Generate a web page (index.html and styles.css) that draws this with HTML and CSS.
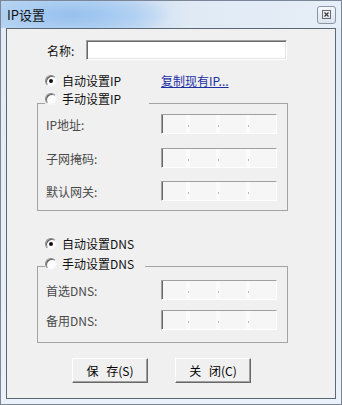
FILE: index.html
```html
<!DOCTYPE html>
<html lang="zh-CN">
<head>
<meta charset="utf-8">
<title>IP设置</title>
<link rel="stylesheet" href="styles.css">
</head>
<body>
<div class="window">
  <div class="titlebar">
    <span class="title">IP设置</span>
    <span class="close">
      <svg width="9" height="9" viewBox="0 0 9 9"><rect x="0.5" y="0.5" width="8" height="8" fill="none" stroke="#6a6a6a"/><path d="M2.5 2.5 L6.5 6.5 M6.5 2.5 L2.5 6.5" stroke="#3a3a3a" stroke-width="1.2"/></svg>
    </span>
  </div>
  <div class="client">
    <div class="name-row">
      <span class="name-label">名称:</span>
      <span class="textbox"></span>
    </div>
    <div class="radio-row ip-auto">
      <span class="radio-item wide"><span class="radio checked"></span><span>自动设置IP</span></span>
      <a class="link" href="#">复制现有IP...</a>
    </div>
    <div class="group group-ip">
      <div class="legend legend-ip"><span class="radio"></span><span>手动设置IP</span></div>
      <div class="field-row r1">
        <span class="field-label">IP地址:</span>
        <span class="ipbox"><span class="seg s1"></span><span class="dot"></span><span class="seg"></span><span class="dot"></span><span class="seg"></span><span class="dot"></span><span class="seg last"></span></span>
      </div>
      <div class="field-row r2">
        <span class="field-label">子网掩码:</span>
        <span class="ipbox"><span class="seg s1"></span><span class="dot"></span><span class="seg"></span><span class="dot"></span><span class="seg"></span><span class="dot"></span><span class="seg last"></span></span>
      </div>
      <div class="field-row r3">
        <span class="field-label">默认网关:</span>
        <span class="ipbox"><span class="seg s1"></span><span class="dot"></span><span class="seg"></span><span class="dot"></span><span class="seg"></span><span class="dot"></span><span class="seg last"></span></span>
      </div>
    </div>
    <div class="radio-row dns-auto">
      <span class="radio-item"><span class="radio checked"></span><span>自动设置DNS</span></span>
    </div>
    <div class="group group-dns">
      <div class="legend legend-dns"><span class="radio"></span><span>手动设置DNS</span></div>
      <div class="field-row d1">
        <span class="field-label">首选DNS:</span>
        <span class="ipbox"><span class="seg s1"></span><span class="dot"></span><span class="seg"></span><span class="dot"></span><span class="seg"></span><span class="dot"></span><span class="seg last"></span></span>
      </div>
      <div class="field-row d2">
        <span class="field-label">备用DNS:</span>
        <span class="ipbox"><span class="seg s1"></span><span class="dot"></span><span class="seg"></span><span class="dot"></span><span class="seg"></span><span class="dot"></span><span class="seg last"></span></span>
      </div>
    </div>
    <div class="buttons">
      <span class="btn">保 存(S)</span>
      <span class="btn">关 闭(C)</span>
    </div>
  </div>
</div>
</body>
</html>
```

FILE: styles.css
```css
html, body {
  margin: 0;
  padding: 0;
  background: #ffffff;
}

body {
  font-family: "Noto Sans CJK SC", "Noto Sans", sans-serif;
  font-size: 12px;
  line-height: 17px;
  color: #111;
}

.window {
  width: 342px;
  height: 405px;
  box-sizing: border-box;
  border: 1px solid #7b8796;
  background: linear-gradient(to bottom, #e2ebf5 0%, #e6eef7 60%, #eaf1f8 100%);
  padding: 0 5px 5px 5px;
  display: flex;
  flex-direction: column;
}

.titlebar {
  height: 27px;
  margin: 0 -5px;
  padding: 0 5px 0 6px;
  display: flex;
  align-items: center;
  justify-content: space-between;
  background:
    radial-gradient(ellipse 100px 24px at 70px 14px, rgba(150, 192, 238, 1) 0%, rgba(170, 205, 242, 0.9) 55%, rgba(205, 224, 245, 0) 100%),
    linear-gradient(to right, #bcd5ef 0%, #c8dcf2 40%, #e0eaf5 55%, #e6eef7 100%);
}

.title {
  font-size: 13px;
  color: #111;
}

.close {
  width: 19px;
  height: 18px;
  box-sizing: border-box;
  border: 1px solid #8a96a6;
  border-radius: 3px;
  background: linear-gradient(to bottom, #f6f9fc 0%, #e6edf5 50%, #dbe4ee 100%);
  display: flex;
  align-items: center;
  justify-content: center;
}

.close svg {
  display: block;
}

.client {
  flex: 1;
  border: 1px solid #5d6875;
  background: #f0f0f0;
}

.name-row {
  margin-top: 11px;
  margin-left: 40px;
  height: 20px;
  display: flex;
  align-items: center;
}

.name-label {
  width: 39px;
}

.textbox {
  width: 201px;
  height: 20px;
  box-sizing: border-box;
  background: #fff;
  border-style: solid;
  border-width: 1px;
  border-color: #a0a0a0 #ffffff #ffffff #a0a0a0;
  box-shadow: inset 1px 1px 0 #696969, inset -1px -1px 0 #e3e3e3;
}

.radio-row {
  height: 17px;
  margin-left: 38px;
  display: flex;
  align-items: center;
}

.ip-auto {
  margin-top: 12px;
}

.dns-auto {
  margin-top: 24px;
}

.radio-item {
  display: flex;
  align-items: center;
}

.radio-item.wide {
  width: 116px;
}

.radio {
  width: 12px;
  height: 12px;
  box-sizing: border-box;
  border-radius: 50%;
  border: 1px solid;
  border-color: #8a8a8a #f4f4f4 #f4f4f4 #8a8a8a;
  box-shadow: inset 1px 1px 0 #5f5f5f;
  background: #fdfdfd;
  margin-right: 5px;
  flex: none;
  display: flex;
  align-items: center;
  justify-content: center;
}

.radio.checked::after {
  content: "";
  width: 4px;
  height: 4px;
  border-radius: 50%;
  background: #111;
}

.link {
  color: #1b2fa3;
  text-decoration: underline;
}

.group {
  margin-left: 30px;
  width: 251px;
  box-sizing: border-box;
  border: 1px solid #a3a3a3;
}

.group-ip {
  margin-top: 14px;
  padding-bottom: 9px;
}

.group-dns {
  margin-top: 14px;
  padding-bottom: 12px;
}

.legend {
  height: 17px;
  width: 104px;
  margin-left: 7px;
  background: #f0f0f0;
  display: flex;
  align-items: center;
}

.legend-ip {
  margin-top: -14px;
}

.legend-dns {
  width: 100px;
  margin-top: -12px;
}

.field-row {
  height: 20px;
  display: flex;
  align-items: center;
  padding-left: 8px;
}

.r1 { margin-top: 7px; }
.r2 { margin-top: 14px; }
.r3 { margin-top: 13px; }
.d1 { margin-top: 8px; }
.d2 { margin-top: 10px; }

.field-label {
  width: 115px;
  color: #4a4a4a;
}

.ipbox {
  width: 116px;
  height: 20px;
  box-sizing: border-box;
  border-style: solid;
  border-width: 1px;
  border-color: #a0a0a0 #ffffff #ffffff #a0a0a0;
  box-shadow: inset 1px 1px 0 #696969, inset -1px -1px 0 #e3e3e3;
  background: #f4f4f4;
  display: flex;
  padding-left: 1px;
}

.seg {
  width: 26px;
  background: #f6f6f6;
}

.seg.s1 {
  width: 23px;
}

.seg.last {
  flex: 1;
}

.dot {
  width: 4px;
  display: flex;
  align-items: center;
  justify-content: center;
  background: #fbfbfb;
}

.dot::after {
  content: "";
  width: 1px;
  height: 2px;
  margin-top: 3px;
  background: #b8b8b8;
}

.buttons {
  margin-top: 15px;
  margin-left: 65px;
  display: flex;
  gap: 27px;
}

.btn {
  width: 76px;
  height: 25px;
  box-sizing: border-box;
  border-style: solid;
  border-width: 1px;
  border-color: #ffffff #696969 #696969 #ffffff;
  box-shadow: inset -1px -1px 0 #a0a0a0;
  background: #f0f0f0;
  display: flex;
  align-items: center;
  justify-content: center;
  word-spacing: 5px;
  color: #000;
}
```
